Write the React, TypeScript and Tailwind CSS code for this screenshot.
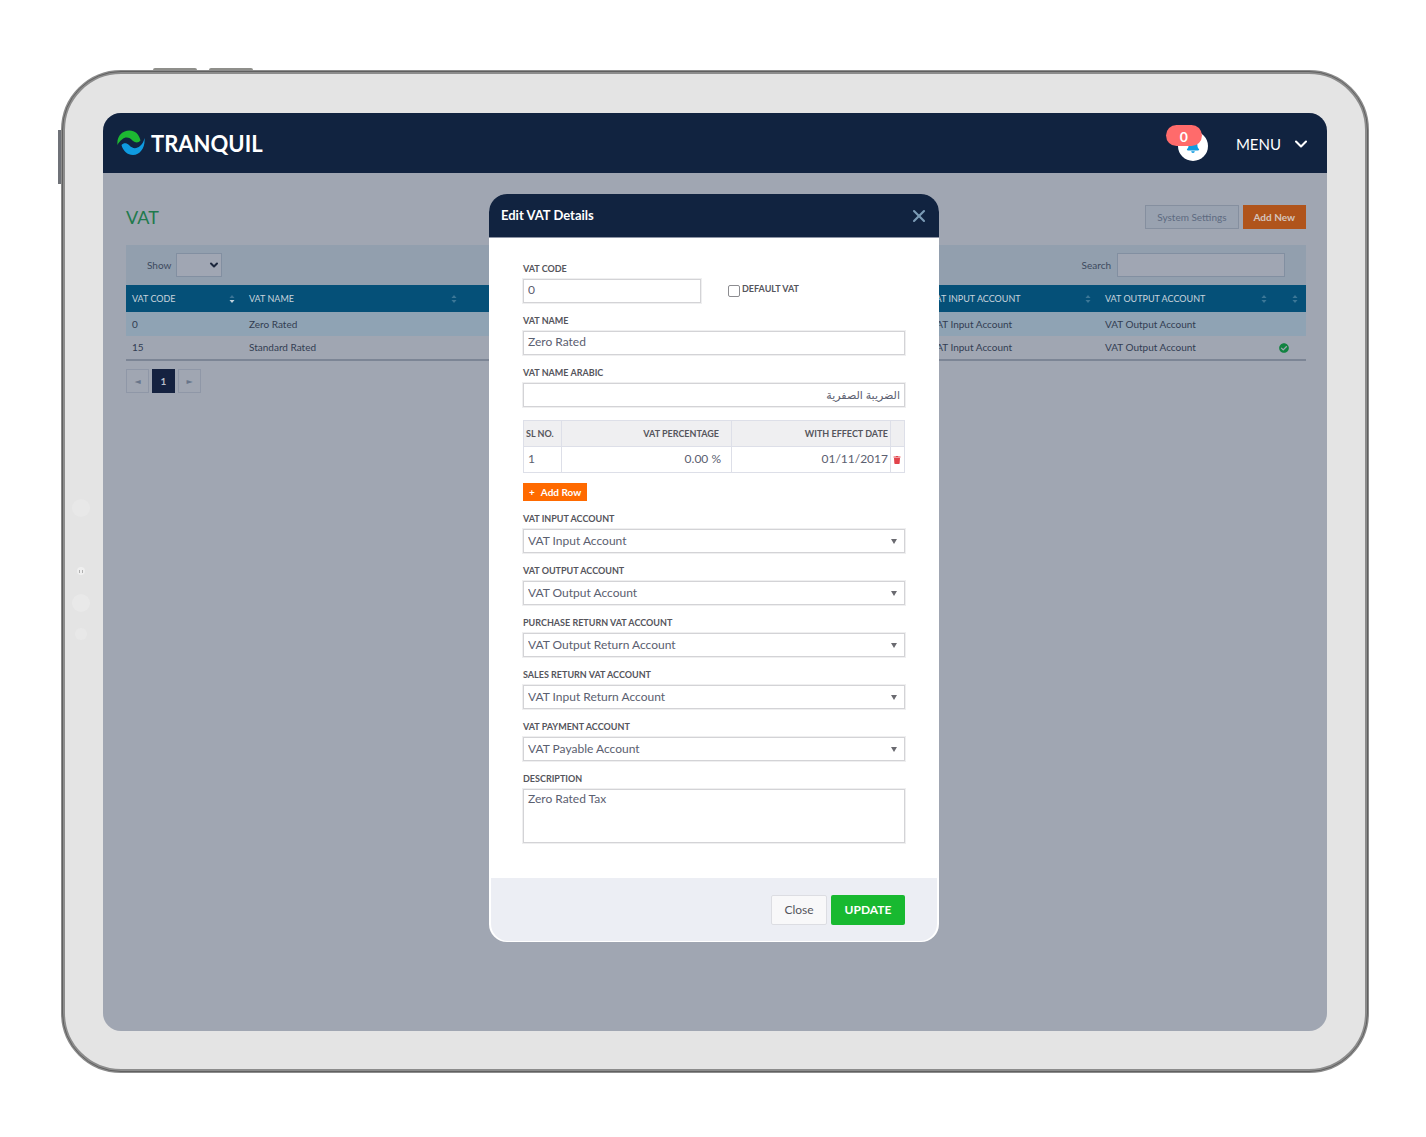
import type { ReactNode } from "react"
import { FaBell, FaCheckCircle, FaTrash } from "react-icons/fa"
import { ChevronDown, X } from "lucide-react"

const accounts = [
  { id: "vat-input", label: "VAT INPUT ACCOUNT", value: "VAT Input Account" },
  { id: "vat-output", label: "VAT OUTPUT ACCOUNT", value: "VAT Output Account" },
  { id: "purchase-return", label: "PURCHASE RETURN VAT ACCOUNT", value: "VAT Output Return Account" },
  { id: "sales-return", label: "SALES RETURN VAT ACCOUNT", value: "VAT Input Return Account" },
  { id: "vat-payment", label: "VAT PAYMENT ACCOUNT", value: "VAT Payable Account" },
]

const rows = [
  { code: "0", name: "Zero Rated", isDefault: false },
  { code: "15", name: "Standard Rated", isDefault: true },
]

const fieldBox = "block w-full h-6 bg-white border border-[#d3d3d6] outline-1 outline-[#efeff0] px-1 text-[#5b6070]"

function Logo() {
  return (
    <a href="#" className="flex items-center gap-1.5 text-white">
      <svg viewBox="0 0 28 26" className="w-7 h-7" aria-hidden="true">
        <path
          d="M0.5 15C-0.5 6.500 5 0.500 12.500 0.500C18 0.500 22 4 23.500 10.500C21.500 13 18.500 13 16 11C12.500 7 8.500 6.500 5 9.500C2.800 11.300 1.300 13 0.500 15Z"
          fill="#1db832"
        />
        <path
          d="M27.500 8C28.500 17 23.500 25 16 25C10.500 25 6 21 4.500 15C6.500 12.800 9.500 12.800 12 15C15.500 19 19.500 19 23 16C25.200 14.200 26.800 11.500 27.500 8Z"
          fill="#0f9be0"
        />
      </svg>
      <span className="pt-0.5 text-[22px] leading-7 font-bold">TRANQUIL</span>
    </a>
  )
}

function SortIcon({ active = false }: { active?: boolean }) {
  return (
    <svg viewBox="0 0 6 10" className="w-1.5 h-2.5 shrink-0" aria-hidden="true">
      <path d="M3 1L5.500 4H0.500Z" fill={active ? "#3c7596" : "#3d7897"} />
      <path d="M3 9L5.500 6H0.500Z" fill={active ? "#c3d4de" : "#3d7897"} />
    </svg>
  )
}

function HeadCell({ children, active }: { children?: ReactNode; active?: boolean }) {
  return (
    <th className="p-0 pl-1.5 pr-2 font-normal text-left">
      <div className="flex items-center justify-between">
        <span>{children}</span>
        <SortIcon active={active} />
      </div>
    </th>
  )
}

function Field({ id, label, children }: { id: string; label: string; children: ReactNode }) {
  return (
    <div>
      <label htmlFor={id} className="block text-[9px] leading-5 font-bold text-[#55555c]">
        {label}
      </label>
      {children}
    </div>
  )
}

function VatList() {
  return (
    <main className="col-start-1 row-start-1 pl-[23px] pr-[21px] pt-8">
      <div className="flex items-center justify-between h-6">
        <h1 className="text-lg leading-6 text-[#1f7a4d]">VAT</h1>
        <div className="flex gap-1 text-[10px]">
          <button className="h-6 px-[11px] border border-[#858f9f] bg-[#99a2b0] text-[#5d6a80]">System Settings</button>
          <button className="h-6 px-[11px] bg-[#b0541b] font-bold text-[#d5c4bc]">Add New</button>
        </div>
      </div>

      <div className="flex items-center justify-between mt-4 h-10 px-[21px] bg-[#929fae] text-[10px] text-[#3d4a5e]">
        <div className="flex items-center gap-[5px]">
          <label htmlFor="page-size">Show</label>
          <div className="relative">
            <select id="page-size" className="block appearance-none w-[46px] h-6 border border-[#828fa1] bg-[#a0a6b3]">
              <option></option>
            </select>
            <ChevronDown strokeWidth={4} className="absolute right-0.5 top-1.5 size-3 text-[#1b263c] pointer-events-none" />
          </div>
        </div>
        <div className="flex items-center gap-1.5">
          <label htmlFor="search">Search</label>
          <input id="search" className="w-[168px] h-6 border border-[#828fa1] bg-[#a0a6b3]" />
        </div>
      </div>

      <table className="w-full table-fixed text-[10px] text-[#323d52]">
        <colgroup>
          <col className="w-[117px]" />
          <col className="w-[222px]" />
          <col />
          <col className="w-[175px]" />
          <col className="w-[176px]" />
          <col className="w-[31px]" />
        </colgroup>
        <thead>
          <tr className="h-[27px] bg-[#055078] text-[9px] text-[#c9d4dd]">
            <HeadCell active>VAT CODE</HeadCell>
            <HeadCell>VAT NAME</HeadCell>
            <HeadCell />
            <HeadCell>VAT INPUT ACCOUNT</HeadCell>
            <HeadCell>VAT OUTPUT ACCOUNT</HeadCell>
            <HeadCell />
          </tr>
        </thead>
        <tbody className="border-b-2 border-[#7c8595]">
          {rows.map((row) => (
            <tr key={row.code} className="h-6 odd:bg-[#8fa3b4]">
              <td className="p-0 pl-1.5">{row.code}</td>
              <td className="p-0 pl-1.5">{row.name}</td>
              <td></td>
              <td className="p-0 pl-1.5">VAT Input Account</td>
              <td className="p-0 pl-1.5">VAT Output Account</td>
              <td className="p-0 pl-1">{row.isDefault && <FaCheckCircle className="size-2.5 text-[#128341]" />}</td>
            </tr>
          ))}
        </tbody>
      </table>

      <nav className="flex gap-[3px] mt-2 text-[10px]">
        <button className="w-[23px] h-6 border border-[#8f97a7] text-[8px] text-[#68758a]" aria-label="Previous page">◄</button>
        <button className="w-[23px] h-6 bg-[#152240] font-bold text-[#b8bfcb]">1</button>
        <button className="w-[23px] h-6 border border-[#8f97a7] text-[8px] text-[#68758a]" aria-label="Next page">►</button>
      </nav>
    </main>
  )
}

function RateTable() {
  const cell = "p-0 border border-[#dddfe8]"
  return (
    <table className="w-full mt-[5px] table-fixed border-collapse text-xs text-[#5b6070]">
      <colgroup>
        <col className="w-[38px]" />
        <col className="w-[170px]" />
        <col />
        <col className="w-[14px]" />
      </colgroup>
      <thead>
        <tr className="h-[26px] bg-[#efeff1] text-[9px] text-[#55555c]">
          <th className={`${cell} pl-0.5 text-left`}>SL NO.</th>
          <th className={`${cell} pr-3 text-right`}>VAT PERCENTAGE</th>
          <th className={`${cell} pr-0.5 text-right`}>WITH EFFECT DATE</th>
          <th className={cell}></th>
        </tr>
      </thead>
      <tbody>
        <tr className="h-[26px]">
          <td className={`${cell} pl-1 pb-0.5`}>1</td>
          <td className={`${cell} pr-2.5 pb-0.5 text-right`}>0.00 %</td>
          <td className={`${cell} pr-0.5 pb-0.5 text-right`}>01/11/2017</td>
          <td className={cell}>
            <button type="button" className="flex ml-0.5" aria-label="Delete row">
              <FaTrash className="size-2 text-[#e2434b]" />
            </button>
          </td>
        </tr>
      </tbody>
    </table>
  )
}

function EditVatDialog() {
  return (
    <div
      role="dialog"
      aria-labelledby="dialog-title"
      className="z-10 col-start-1 row-start-1 justify-self-center w-[450px] mr-0.5 mt-[21px] mb-[89px] rounded-[18px] bg-white overflow-hidden"
    >
      <header className="flex items-center justify-between h-11 pl-3 pr-2.5 bg-[#112340] border-b border-[#8d94a5]">
        <h2 id="dialog-title" className="text-[13px] font-bold text-white">
          Edit VAT Details
        </h2>
        <button aria-label="Close dialog">
          <X className="size-5 text-[#7b9bb5]" strokeWidth={2.500} />
        </button>
      </header>

      <form className="flex flex-col gap-2 px-[34px] pt-[21px] pb-[35px]">
        <div className="flex items-end gap-[27px]">
          <div className="w-[178px]">
            <Field id="vat-code" label="VAT CODE">
              <input id="vat-code" defaultValue="0" className={`${fieldBox} pb-1 text-xs`} />
            </Field>
          </div>
          <div className="flex items-center gap-0.5 h-6">
            <input
              id="default-vat"
              type="checkbox"
              className="appearance-none size-3 rounded-xs border border-[#8c8c90] bg-white checked:bg-[#0f9be0]"
            />
            <label htmlFor="default-vat" className="pb-1 text-[9px] font-bold text-[#55555c]">
              DEFAULT VAT
            </label>
          </div>
        </div>
        <Field id="vat-name" label="VAT NAME">
          <input id="vat-name" defaultValue="Zero Rated" className={`${fieldBox} pb-1 text-xs`} />
        </Field>
        <Field id="vat-name-arabic" label="VAT NAME ARABIC">
          <input
            id="vat-name-arabic"
            dir="rtl"
            lang="ar"
            defaultValue="الضريبة الصفرية"
            className={`${fieldBox} text-[11px]`}
          />
        </Field>

        <RateTable />
        <button
          type="button"
          className="self-start flex items-center gap-1.5 h-[18px] mt-0.5 px-1.5 bg-[#ff6a00] text-[10px] font-bold text-white"
        >
          <span>+</span>
          Add Row
        </button>

        {accounts.map((account) => (
          <Field key={account.id} id={account.id} label={account.label}>
            <div className="relative">
              <select id={account.id} className={`${fieldBox} appearance-none pb-px text-xs`}>
                <option>{account.value}</option>
              </select>
              <svg viewBox="0 0 6 5" className="absolute right-2 top-2.5 w-1.5 h-[5px] pointer-events-none" aria-hidden="true">
                <path d="M0 0H6L3 5Z" fill="#6a6a70" />
              </svg>
            </div>
          </Field>
        ))}

        <Field id="description" label="DESCRIPTION">
          <textarea
            id="description"
            defaultValue="Zero Rated Tax"
            className="block w-full h-[54px] resize-none border border-[#d3d3d6] outline-1 outline-[#efeff0] px-1 py-px text-xs text-[#5b6070]"
          />
        </Field>
      </form>

      <footer className="flex justify-end gap-1 mx-0.5 mb-px px-8 pt-[17px] pb-4 rounded-b-[17px] bg-[#eceef4] text-xs">
        <button className="h-[30px] w-14 rounded-xs border border-[#dcdde2] bg-[#f8f8f9] text-[#55555c]">Close</button>
        <button className="h-[30px] w-[74px] rounded-xs bg-[#18b930] font-bold text-white">UPDATE</button>
      </footer>
    </div>
  )
}

export default function App() {
  return (
    <div className="min-h-screen bg-white pl-[61px] pr-[57px] pt-[70px] pb-16 font-['Lato','DejaVu_Sans',sans-serif]">
      {/* Tablet */}
      <div className="relative rounded-[60px] border-4 border-[#8c8c8c] bg-[#e4e4e4] px-[38px] pt-[39px] pb-[38px] outline-1 -outline-offset-2 outline-[#606060]">
        {/* Hardware buttons */}
        <div className="absolute left-[88px] -top-1.5 w-11 h-0.5 rounded-t bg-[#8f8f8b]" />
        <div className="absolute left-36 -top-1.5 w-11 h-0.5 rounded-t bg-[#8f8f8b]" />
        <div className="absolute -left-[7px] top-14 w-[3px] h-[54px] bg-[#6f7278]" />

        {/* Camera and sensors */}
        <div className="absolute left-[7px] top-[425px] size-[18px] rounded-full bg-[#e8e8e8]" />
        <div className="absolute left-3 top-[493px] flex items-center justify-center gap-0.5 size-2 rounded-full bg-[#efefef]">
          <span className="w-px h-[3px] bg-[#b0b0b0]" />
          <span className="w-px h-[3px] bg-[#b0b0b0]" />
        </div>
        <div className="absolute left-[7px] top-[520px] size-[18px] rounded-full bg-[#e9e9e9]" />
        <div className="absolute left-2.5 top-[554px] size-3 rounded-full bg-[#e8e8e8]" />

        <div className="rounded-[18px] bg-[#a0a6b2] overflow-hidden">
          <header className="flex items-center justify-between h-[60px] pl-3.5 pr-4 bg-[#112340]">
            <Logo />
            <div className="flex items-center gap-7 text-white">
              <button className="relative flex items-end justify-center size-[30px] mt-1.5 pb-2 rounded-full bg-white" aria-label="Notifications">
                <FaBell className="size-3.5 text-[#0f9be0]" />
                <span className="absolute -left-3 -top-1.5 w-9 h-[21px] rounded-full bg-[#ff6b6b] text-sm leading-6 font-bold text-center">
                  0
                </span>
              </button>
              <button className="flex items-center gap-2.5 pt-0.5 text-[15px]">
                MENU
                <ChevronDown className="size-5" strokeWidth={2.500} />
              </button>
            </div>
          </header>
          <div className="grid">
            <VatList />
            <EditVatDialog />
          </div>
        </div>
      </div>
    </div>
  )
}
